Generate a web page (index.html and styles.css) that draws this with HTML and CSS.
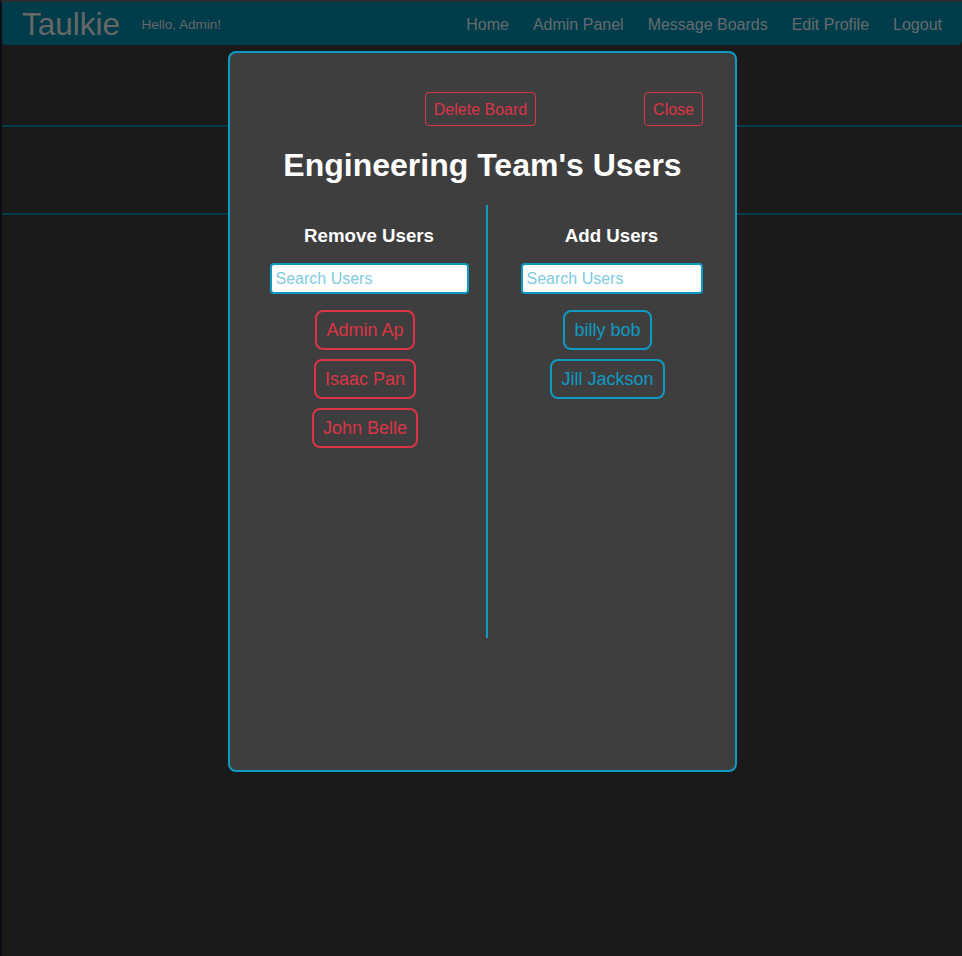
FILE: index.html
```html
<!DOCTYPE html>
<html lang="en">
<head>
<meta charset="utf-8">
<title>Taulkie</title>
<link rel="stylesheet" href="styles.css">
</head>
<body>
<div class="page">
  <nav class="navbar">
    <div class="nav-left">
      <span class="brand">Taulkie</span>
      <span class="greeting">Hello, Admin!</span>
    </div>
    <ul class="nav-links">
      <li><a href="#">Home</a></li>
      <li><a href="#">Admin Panel</a></li>
      <li><a href="#">Message Boards</a></li>
      <li><a href="#">Edit Profile</a></li>
      <li><a href="#">Logout</a></li>
    </ul>
  </nav>
  <main class="content">
    <section class="board-row"></section>
  </main>

  <div class="modal">
    <div class="modal-header">
      <span></span>
      <button class="btn-outline-red">Delete Board</button>
      <button class="btn-outline-red btn-close">Close</button>
    </div>
    <h1 class="modal-title">Engineering Team's Users</h1>
    <div class="columns">
      <div class="col col-left">
        <h3 class="col-title">Remove Users</h3>
        <input class="search search-left" type="text" placeholder="Search Users">
        <div class="user-list">
          <button class="user-chip chip-red">Admin Ap</button>
          <button class="user-chip chip-red">Isaac Pan</button>
          <button class="user-chip chip-red">John Belle</button>
        </div>
      </div>
      <div class="col col-right">
        <h3 class="col-title">Add Users</h3>
        <input class="search search-right" type="text" placeholder="Search Users">
        <div class="user-list">
          <button class="user-chip chip-blue">billy bob</button>
          <button class="user-chip chip-blue">Jill Jackson</button>
        </div>
      </div>
    </div>
  </div>
</div>
</body>
</html>
```

FILE: styles.css
```css
* { box-sizing: border-box; }

html, body {
  margin: 0;
  padding: 0;
  background: #1a1a1a;
  font-family: "Liberation Sans", Arial, sans-serif;
}

.page {
  position: relative;
  min-height: 956px;
  background: #1a1a1a;
  border-left: 2px solid #0d0d15;
  border-top: 2px solid #2b2b2b;
}

.navbar {
  height: 43px;
  background: #003c4a;
  border-radius: 0 0 4px 4px;
  display: flex;
  align-items: center;
  justify-content: space-between;
  padding: 2px 20px 0 20px;
}

.nav-left {
  display: flex;
  align-items: center;
  gap: 21.5px;
}

.brand {
  font-size: 31.5px;
  color: #686868;
}

.greeting {
  font-size: 13.5px;
  color: #686868;
}

.nav-links {
  list-style: none;
  margin: 0;
  padding: 0;
  display: flex;
  gap: 24px;
}

.nav-links a {
  color: #666c6e;
  text-decoration: none;
  font-size: 16px;
}

.content {
  padding-top: 80px;
}

.board-row {
  height: 90px;
  border-top: 2px solid #003c4a;
  border-bottom: 2px solid #003c4a;
}

.modal {
  position: absolute;
  top: 49px;
  left: 226px;
  width: 509px;
  height: 721px;
  background: #3e3e3e;
  border: 2px solid #0e9ac4;
  border-radius: 8px;
  padding-top: 39px;
}

.modal-header {
  display: grid;
  grid-template-columns: 1fr auto 1fr;
  align-items: center;
  padding: 0 32px 0 28px;
}

.btn-outline-red {
  font-family: "Liberation Sans", Arial, sans-serif;
  font-size: 16px;
  line-height: 24px;
  padding: 5px 8px 3px;
  color: #dc3545;
  background: transparent;
  border: 1px solid #dc3545;
  border-radius: 4px;
}

.btn-close {
  justify-self: end;
}

.modal-title {
  margin: 21px 0 21px;
  text-align: center;
  color: #ffffff;
  font-size: 32px;
  font-weight: bold;
  line-height: 37px;
}

.columns {
  display: grid;
  grid-template-columns: 234px 1fr;
  height: 433px;
  padding-left: 22px;
}

.col {
  display: flex;
  flex-direction: column;
  align-items: center;
  padding-top: 20px;
}

.col-right {
  border-left: 2px solid #0e9ac4;
}

.col-title {
  margin: 0 0 16.5px;
  color: #ffffff;
  font-size: 18.72px;
  line-height: 21.5px;
  font-weight: bold;
}

.search {
  height: 31px;
  border: 2px solid #0e9ac4;
  border-radius: 4px;
  background: #ffffff;
  padding: 1px 4px 0;
  font-family: "Liberation Sans", Arial, sans-serif;
  font-size: 16px;
  color: #333;
  outline: none;
}

.search::placeholder {
  color: #7fcbe0;
}

.search-left { width: 199px; }
.search-right { width: 182px; }

.user-list {
  margin-top: 16px;
  padding-right: 8px;
  display: flex;
  flex-direction: column;
  align-items: center;
  gap: 9px;
}

.user-chip {
  font-family: "Liberation Sans", Arial, sans-serif;
  font-size: 18px;
  line-height: 22px;
  padding: 7px 9px;
  background: transparent;
  border: 2px solid;
  border-radius: 8px;
}

.chip-red {
  color: #dc3545;
  border-color: #dc3545;
}

.chip-blue {
  color: #0e9ac4;
  border-color: #0e9ac4;
}
```
